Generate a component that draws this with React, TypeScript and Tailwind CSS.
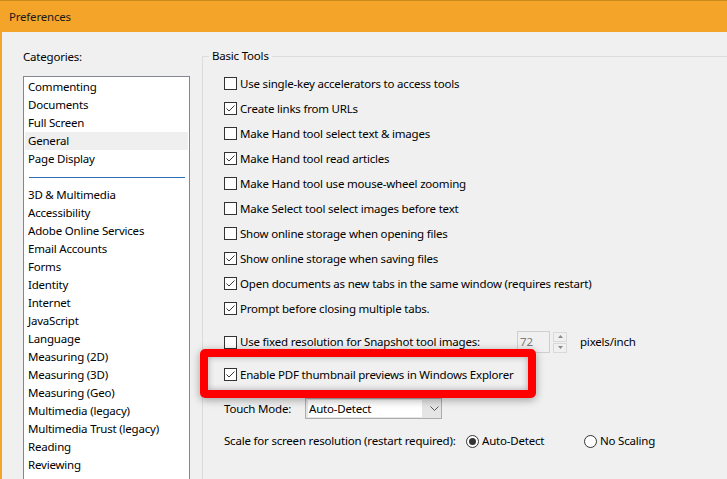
import React from "react"
import { FC } from "react"

interface CheckboxProps {
    checked?: boolean
}

const Checkbox: FC<CheckboxProps> = ({ checked = false }) => (
    <span className="flex items-center justify-center w-[13px] h-[13px] shrink-0 border border-[#333333] bg-white">
        {checked && (
            <svg width="11" height="11" viewBox="0 0 11 11">
                <polyline
                    points="1.5,5.5 4,8 9.5,2.5"
                    fill="none"
                    stroke="#3a3a3a"
                    strokeWidth="1"
                />
            </svg>
        )}
    </span>
)

const Radio: FC<CheckboxProps> = ({ checked = false }) => (
    <span className="flex items-center justify-center w-[13px] h-[13px] shrink-0 rounded-full border border-[#333333] bg-white">
        {checked && <span className="w-[7px] h-[7px] rounded-full bg-[#333333]" />}
    </span>
)

interface OptionRowProps {
    label: string
    checked?: boolean
}

const OptionRow: FC<OptionRowProps> = ({ label, checked }) => (
    <div className="flex items-center h-[25px]">
        <Checkbox checked={checked} />
        <span className="ml-[3px] whitespace-nowrap">{label}</span>
    </div>
)

const topCategories = ["Commenting", "Documents", "Full Screen", "General", "Page Display"]

const moreCategories = [
    "3D & Multimedia",
    "Accessibility",
    "Adobe Online Services",
    "Email Accounts",
    "Forms",
    "Identity",
    "Internet",
    "JavaScript",
    "Language",
    "Measuring (2D)",
    "Measuring (3D)",
    "Measuring (Geo)",
    "Multimedia (legacy)",
    "Multimedia Trust (legacy)",
    "Reading",
    "Reviewing",
    "Search",
]

const basicTools: OptionRowProps[] = [
    { label: "Use single-key accelerators to access tools" },
    { label: "Create links from URLs", checked: true },
    { label: "Make Hand tool select text & images" },
    { label: "Make Hand tool read articles", checked: true },
    { label: "Make Hand tool use mouse-wheel zooming" },
    { label: "Make Select tool select images before text" },
    { label: "Show online storage when opening files" },
    { label: "Show online storage when saving files", checked: true },
    { label: "Open documents as new tabs in the same window (requires restart)", checked: true },
    { label: "Prompt before closing multiple tabs.", checked: true },
]

const CategoryItem: FC<{ name: string; selected?: boolean }> = ({ name, selected }) => (
    <div
        className={
            selected
                ? "mx-[1px] pl-[3px] h-[18px] leading-[18px] whitespace-nowrap bg-[#efefef]"
                : "mx-[1px] pl-[3px] h-[18px] leading-[18px] whitespace-nowrap"
        }
    >
        {name}
    </div>
)

export default function App() {
    return (
        <div className="w-[727px] h-[479px] overflow-hidden bg-[#f0f0f0] text-[11.5px] tracking-[-0.2px] text-black font-['Noto_Sans',sans-serif]">
            {/* title bar */}
            <div className="h-[32px] flex items-center pl-[9px] bg-[#f5a42a] border-t border-[#c98c1c] text-[#1a1a1a]">
                Preferences
            </div>

            <div className="flex h-[447px] border-l-2 border-[#f5a42a]">
                {/* categories */}
                <div className="pl-[21px] pt-[16px] shrink-0">
                    <div className="leading-[18px]">Categories:</div>
                    <div className="mt-[10px] w-[167px] h-[420px] border border-[#828790] bg-white pt-[1px]">
                        {topCategories.map((c) => (
                            <CategoryItem key={c} name={c} selected={c === "General"} />
                        ))}
                        <div className="h-[18px] flex items-center pl-[5px] pr-[4px]">
                            <div className="w-full h-px bg-[#2f6fb5]" />
                        </div>
                        {moreCategories.map((c) => (
                            <CategoryItem key={c} name={c} />
                        ))}
                    </div>
                </div>

                {/* basic tools */}
                <fieldset className="ml-[12px] mt-[15px] flex-1 min-w-0 border-l border-t border-[#dcdcdc]">
                    <legend className="ml-[6px] px-[3px] leading-[18px]">Basic Tools</legend>
                    <div className="pl-[21px] pt-[6px]">
                        {basicTools.map((o) => (
                            <OptionRow key={o.label} label={o.label} checked={o.checked} />
                        ))}

                        <div className="flex items-center h-[22px] mt-[10px]">
                            <Checkbox />
                            <span className="ml-[3px] w-[277px] whitespace-nowrap">
                                Use fixed resolution for Snapshot tool images:
                            </span>
                            <div className="w-[33px] h-[22px] border border-[#cfcfcf] bg-[#f0f0f0] pl-[2px] leading-[20px] text-[#7a7a7a]">
                                72
                            </div>
                            <div className="ml-[3px] w-[14px] h-[21px] flex flex-col gap-[1px]">
                                <div className="flex-1 flex items-center justify-center border border-[#d9d9d9] bg-[#f0f0f0]">
                                    <svg width="5" height="3" viewBox="0 0 5 3">
                                        <polygon points="0,3 2.5,0 5,3" fill="#8a8a8a" />
                                    </svg>
                                </div>
                                <div className="flex-1 flex items-center justify-center border border-[#d9d9d9] bg-[#f0f0f0]">
                                    <svg width="5" height="3" viewBox="0 0 5 3">
                                        <polygon points="0,0 2.5,3 5,0" fill="#8a8a8a" />
                                    </svg>
                                </div>
                            </div>
                            <span className="ml-[13px]">pixels/inch</span>
                        </div>

                        <div className="relative mt-[9px]">
                            <OptionRow label="Enable PDF thumbnail previews in Windows Explorer" checked />
                            <div className="absolute left-[-24px] top-[-13px] w-[336px] h-[49px] rounded-[5px] border-[8px] border-[#ff0000] shadow-[0_2px_8px_rgba(0,0,0,0.35),inset_0_0_6px_rgba(0,0,0,0.3)]" />
                        </div>

                        <div className="flex items-center h-[21px] mt-[11px]">
                            <span className="w-[81px]">Touch Mode:</span>
                            <div className="w-[137px] h-[21px] flex items-center border border-[#adadad] bg-[#e5e5e5]">
                                <div className="ml-[2px] w-[114px] h-[17px] bg-white pl-[1px] leading-[17px]">
                                    Auto-Detect
                                </div>
                                <svg className="ml-[8px]" width="9" height="5" viewBox="0 0 9 5">
                                    <polyline points="0.5,0.5 4.5,4.5 8.5,0.5" fill="none" stroke="#555555" strokeWidth="1" />
                                </svg>
                            </div>
                        </div>

                        <div className="flex items-center h-[20px] mt-[12px]">
                            <span className="w-[242px] whitespace-nowrap">
                                Scale for screen resolution (restart required):
                            </span>
                            <div className="flex items-center w-[118px]">
                                <Radio checked />
                                <span className="ml-[3px]">Auto-Detect</span>
                            </div>
                            <div className="flex items-center">
                                <Radio />
                                <span className="ml-[3px]">No Scaling</span>
                            </div>
                        </div>
                    </div>
                </fieldset>
            </div>
        </div>
    )
}
